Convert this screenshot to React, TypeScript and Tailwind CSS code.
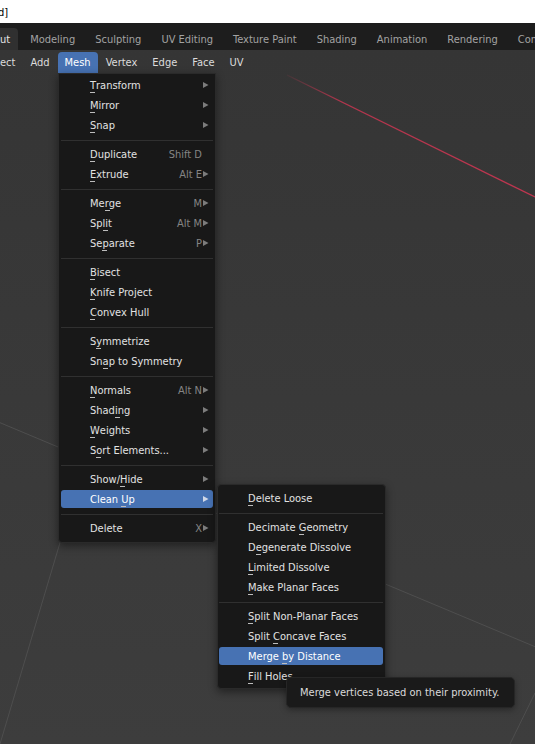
import React from 'react';

type Item = { t: string; u?: number; sc?: string; arrow?: boolean; active?: boolean };

const mainGroups: Item[][] = [
  [
    { t: 'Transform', u: 0, arrow: true },
    { t: 'Mirror', u: 0, arrow: true },
    { t: 'Snap', u: 0, arrow: true },
  ],
  [
    { t: 'Duplicate', u: 0, sc: 'Shift D' },
    { t: 'Extrude', u: 0, sc: 'Alt E', arrow: true },
  ],
  [
    { t: 'Merge', u: 2, sc: 'M', arrow: true },
    { t: 'Split', u: 2, sc: 'Alt M', arrow: true },
    { t: 'Separate', u: 2, sc: 'P', arrow: true },
  ],
  [
    { t: 'Bisect', u: 0 },
    { t: 'Knife Project', u: 0 },
    { t: 'Convex Hull', u: 0 },
  ],
  [
    { t: 'Symmetrize', u: 1 },
    { t: 'Snap to Symmetry', u: 2 },
  ],
  [
    { t: 'Normals', u: 0, sc: 'Alt N', arrow: true },
    { t: 'Shading', u: 4, arrow: true },
    { t: 'Weights', u: 0, arrow: true },
    { t: 'Sort Elements...', u: 1, arrow: true },
  ],
  [
    { t: 'Show/Hide', u: 5, arrow: true },
    { t: 'Clean Up', u: 6, arrow: true, active: true },
  ],
  [{ t: 'Delete', sc: 'X', arrow: true }],
];

const subGroups: Item[][] = [
  [{ t: 'Delete Loose', u: 0 }],
  [
    { t: 'Decimate Geometry', u: 9 },
    { t: 'Degenerate Dissolve', u: 1 },
    { t: 'Limited Dissolve', u: 0 },
    { t: 'Make Planar Faces', u: 0 },
  ],
  [
    { t: 'Split Non-Planar Faces', u: 0 },
    { t: 'Split Concave Faces', u: 6 },
    { t: 'Merge by Distance', u: 6, active: true },
    { t: 'Fill Holes', u: 0 },
  ],
];

function Label({ t, u }: { t: string; u?: number }) {
  if (u === undefined) return <span className="whitespace-pre">{t}</span>;
  return (
    <span className="whitespace-pre">
      {t.slice(0, u)}
      <span className="relative">
        {t[u]}
        <span className="absolute left-0 bottom-[-1px] w-[5px] h-px bg-[#bdbdbd]" />
      </span>
      {t.slice(u + 1)}
    </span>
  );
}

function Arrow({ light }: { light?: boolean }) {
  return (
    <svg width="6" height="6" viewBox="0 0 6 6" className="block">
      <polygon points="0,0 5.5,3 0,6" fill={light ? '#d0d8e8' : '#7c7c7c'} />
    </svg>
  );
}

function Row({ item, main }: { item: Item; main: boolean }) {
  return (
    <div className="h-[20px] py-px">
      <div
        className={`h-[18px] flex items-center rounded-[3px] pl-[29px] pr-[4px] ${
          item.active ? 'bg-[#4772b3] text-white' : 'text-[#e2e2e2]'
        }`}
      >
        <div className="flex-1">
          <Label t={item.t} u={item.u} />
        </div>
        {main && (
          <>
            {item.sc && (
              <span className={item.active ? 'text-[#dfe6f2]' : 'text-[#858585]'}>{item.sc}</span>
            )}
            <span className="w-[6px] ml-px flex items-center">{item.arrow && <Arrow light={item.active} />}</span>
          </>
        )}
      </div>
    </div>
  );
}

function Sep() {
  return (
    <div className="h-[9px] pt-[5px]">
      <div className="h-px bg-[#303030]" />
    </div>
  );
}

function Menu({ groups, main }: { groups: Item[][]; main: boolean }) {
  return (
    <>
      {groups.map((g, gi) => (
        <React.Fragment key={gi}>
          {gi > 0 && <Sep />}
          {g.map((it) => (
            <Row key={it.t} item={it} main={main} />
          ))}
        </React.Fragment>
      ))}
    </>
  );
}

export default function App() {
  const tabs = ['Modeling', 'Sculpting', 'UV Editing', 'Texture Paint', 'Shading', 'Animation', 'Rendering', 'Compositing'];
  const headerItems = ['Add', 'Mesh', 'Vertex', 'Edge', 'Face', 'UV'];
  return (
    <div className="relative w-[535px] h-[744px] overflow-hidden flex flex-col text-[11px] leading-none [font-family:'DejaVu_Sans_Condensed','DejaVu_Sans',sans-serif] bg-[#383838]">
      {/* title bar strip */}
      <div className="h-[23px] shrink-0 bg-white text-black text-[11px] pt-[7px] whitespace-nowrap">
        <span className="ml-[-2px]">d]</span>
      </div>
      {/* workspace tabs */}
      <div className="h-[27px] shrink-0 bg-[#1d1d1d] flex items-end gap-[4px] whitespace-nowrap">
        <div className="h-[22px] flex items-center pr-[8px] bg-[#303030] rounded-tr-[4px] text-[#e4e4e4]">ut</div>
        {tabs.map((t) => (
          <div key={t} className="h-[22px] flex items-center px-[8px] text-[#a3a3a3]">
            {t}
          </div>
        ))}
      </div>
      {/* viewport */}
      <div className="relative flex-1 bg-gradient-to-b from-[#353535] to-[#3d3d3d]">
        <svg className="absolute left-0 top-0 pointer-events-none" width="535" height="694" viewBox="0 50 535 694">
          <defs>
            <linearGradient id="xfade" x1="287" y1="75" x2="535" y2="197" gradientUnits="userSpaceOnUse">
              <stop offset="0" stopColor="#c0354f" stopOpacity="0.1" />
              <stop offset="0.22" stopColor="#c0354f" stopOpacity="0.9" />
              <stop offset="1" stopColor="#c0354f" stopOpacity="1" />
            </linearGradient>
          </defs>
          <line x1="287" y1="75" x2="535" y2="197" stroke="url(#xfade)" strokeWidth="1.3" />
          <line x1="0" y1="422.7" x2="535" y2="646.7" stroke="#4e4e4e" strokeWidth="1" />
          <line x1="0" y1="744" x2="90" y2="442" stroke="#4e4e4e" strokeWidth="1" />
          <line x1="510" y1="744" x2="535" y2="693" stroke="#4e4e4e" strokeWidth="1" />
        </svg>
        {/* header row */}
        <div className="relative h-[23px] pt-[2px] flex gap-px whitespace-nowrap text-[#dcdcdc]">
          <div className="h-[21px] flex items-center pr-[7px]">ect</div>
          {headerItems.map((h) => (
            <div
              key={h}
              className={`h-[21px] flex items-center px-[7px] rounded-t-[4px] ${
                h === 'Mesh' ? 'bg-[#4772b3] text-white' : ''
              }`}
            >
              {h}
            </div>
          ))}
        </div>
      </div>

      {/* main Mesh menu */}
      <div className="absolute left-[58px] top-[73px] w-[158px] bg-[#181818] border border-[#2a2a2a] rounded-b-[4px] pt-px pb-[4px] px-[2px] shadow-[0_3px_8px_rgba(0,0,0,0.45)] whitespace-nowrap">
        <Menu groups={mainGroups} main={true} />
      </div>

      {/* Clean Up submenu */}
      <div className="absolute left-[217px] top-[484px] w-[169px] bg-[#181818] border border-[#2a2a2a] rounded-[4px] pt-[3px] pb-[2px] pl-px pr-[2px] shadow-[0_3px_8px_rgba(0,0,0,0.45)] whitespace-nowrap">
        <Menu groups={subGroups} main={false} />
      </div>

      {/* tooltip */}
      <div className="absolute left-[286px] top-[677px] w-[229px] h-[31px] bg-[#1a1a1a] border border-[#262626] rounded-[5px] flex items-center pl-[13px] text-[#dadada] whitespace-nowrap shadow-[0_2px_6px_rgba(0,0,0,0.35)]">
        Merge vertices based on their proximity.
      </div>
    </div>
  );
}
